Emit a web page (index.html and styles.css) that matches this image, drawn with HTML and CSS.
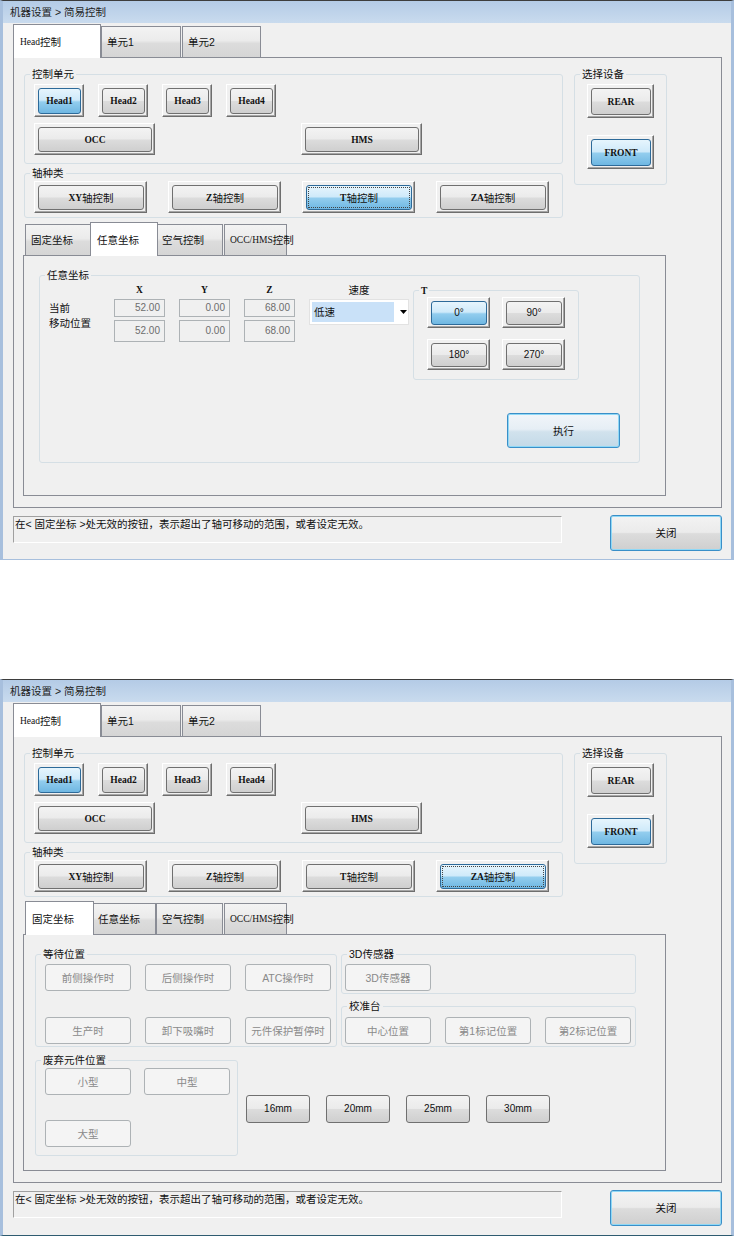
FILE: index.html
```html
<!DOCTYPE html>
<html lang="zh-CN">
<head>
    <meta charset="UTF-8">
    <title>简易控制</title>
    <link rel="stylesheet" href="styles.css">
</head>
<body>

<!-- Window 1: 任意坐标 page -->
<div class="win">
    <div class="titlebar">机器设置 &gt; 简易控制</div>
    <div class="wbody">
        <div class="tabs">
            <div class="tab on t-head"><span class="lat">Head</span>控制</div>
            <div class="tab t-u1">单元1</div>
            <div class="tab t-u2">单元2</div>
        </div>
        <div class="panel">
            <div class="toprow">
                <div class="leftcol">
                    <fieldset class="grp g-unit">
                        <legend>控制单元</legend>
                        <div class="gb">
                            <div class="row heads">
                                <button class="fb hd on"><span class="face"><span class="lat">Head1</span></span></button>
                                <button class="fb hd"><span class="face"><span class="lat">Head2</span></span></button>
                                <button class="fb hd"><span class="face"><span class="lat">Head3</span></span></button>
                                <button class="fb hd"><span class="face"><span class="lat">Head4</span></span></button>
                            </div>
                            <div class="row occrow">
                                <button class="fb wide"><span class="face"><span class="lat">OCC</span></span></button>
                                <button class="fb wide"><span class="face"><span class="lat">HMS</span></span></button>
                            </div>
                        </div>
                    </fieldset>
                    <fieldset class="grp g-axis">
                        <legend>轴种类</legend>
                        <div class="gb row">
                            <button class="fb ax"><span class="face"><span class="lat">XY</span>轴控制</span></button>
                            <button class="fb ax"><span class="face"><span class="lat">Z</span>轴控制</span></button>
                            <button class="fb ax on focus"><span class="face"><span class="lat">T</span>轴控制</span></button>
                            <button class="fb ax"><span class="face"><span class="lat">ZA</span>轴控制</span></button>
                        </div>
                    </fieldset>
                </div>
                <fieldset class="grp g-dev">
                    <legend>选择设备</legend>
                    <div class="gb">
                        <button class="fb dev"><span class="face"><span class="lat">REAR</span></span></button>
                        <button class="fb dev on"><span class="face"><span class="lat">FRONT</span></span></button>
                    </div>
                </fieldset>
            </div>

            <div class="subtabs">
                <div class="tab t-fix">固定坐标</div>
                <div class="tab on t-any">任意坐标</div>
                <div class="tab t-air">空气控制</div>
                <div class="tab t-occ"><span class="lat">OCC/HMS</span>控制</div>
            </div>
            <div class="subpanel any-pane">
                <fieldset class="grp g-any">
                    <legend>任意坐标</legend>
                    <div class="gb">
                        <div class="crow">
                            <div class="coords">
                                <span></span>
                                <span class="hdr">X</span>
                                <span class="hdr">Y</span>
                                <span class="hdr">Z</span>
                                <span class="hdr cjk">速度</span>
                                <span class="lbl">当前</span>
                                <span class="tb">52.00</span>
                                <span class="tb">0.00</span>
                                <span class="tb">68.00</span>
                                <div class="dd">
                                    <span class="sel">低速</span>
                                    <svg width="7" height="4" viewBox="0 0 7 4"><polygon points="0,0 7,0 3.5,4" fill="#000"/></svg>
                                </div>
                                <span class="lbl lbl2">移动位置</span>
                                <span class="tb">52.00</span>
                                <span class="tb">0.00</span>
                                <span class="tb">68.00</span>
                            </div>
                            <fieldset class="grp g-t">
                                <legend><span class="lat">T</span></legend>
                                <div class="gb">
                                    <button class="fb deg on"><span class="face">0°</span></button>
                                    <button class="fb deg"><span class="face">90°</span></button>
                                    <button class="fb deg"><span class="face">180°</span></button>
                                    <button class="fb deg"><span class="face">270°</span></button>
                                </div>
                            </fieldset>
                        </div>
                        <div class="exec-row">
                            <button class="dbtn exec"><span class="face">执行</span></button>
                        </div>
                    </div>
                </fieldset>
            </div>
        </div>
        <div class="footer">
            <div class="status">在&lt; 固定坐标 &gt;处无效的按钮，表示超出了轴可移动的范围，或者设定无效。</div>
            <button class="dbtn close"><span class="face">关闭</span></button>
        </div>
    </div>
</div>

<!-- Window 2: 固定坐标 page -->
<div class="win win2">
    <div class="titlebar">机器设置 &gt; 简易控制</div>
    <div class="wbody">
        <div class="tabs">
            <div class="tab on t-head"><span class="lat">Head</span>控制</div>
            <div class="tab t-u1">单元1</div>
            <div class="tab t-u2">单元2</div>
        </div>
        <div class="panel">
            <div class="toprow">
                <div class="leftcol">
                    <fieldset class="grp g-unit">
                        <legend>控制单元</legend>
                        <div class="gb">
                            <div class="row heads">
                                <button class="fb hd on"><span class="face"><span class="lat">Head1</span></span></button>
                                <button class="fb hd"><span class="face"><span class="lat">Head2</span></span></button>
                                <button class="fb hd"><span class="face"><span class="lat">Head3</span></span></button>
                                <button class="fb hd"><span class="face"><span class="lat">Head4</span></span></button>
                            </div>
                            <div class="row occrow">
                                <button class="fb wide"><span class="face"><span class="lat">OCC</span></span></button>
                                <button class="fb wide"><span class="face"><span class="lat">HMS</span></span></button>
                            </div>
                        </div>
                    </fieldset>
                    <fieldset class="grp g-axis">
                        <legend>轴种类</legend>
                        <div class="gb row">
                            <button class="fb ax"><span class="face"><span class="lat">XY</span>轴控制</span></button>
                            <button class="fb ax"><span class="face"><span class="lat">Z</span>轴控制</span></button>
                            <button class="fb ax"><span class="face"><span class="lat">T</span>轴控制</span></button>
                            <button class="fb ax on focus"><span class="face"><span class="lat">ZA</span>轴控制</span></button>
                        </div>
                    </fieldset>
                </div>
                <fieldset class="grp g-dev">
                    <legend>选择设备</legend>
                    <div class="gb">
                        <button class="fb dev"><span class="face"><span class="lat">REAR</span></span></button>
                        <button class="fb dev on"><span class="face"><span class="lat">FRONT</span></span></button>
                    </div>
                </fieldset>
            </div>

            <div class="subtabs">
                <div class="tab on t-fix">固定坐标</div>
                <div class="tab t-any">任意坐标</div>
                <div class="tab t-air">空气控制</div>
                <div class="tab t-occ"><span class="lat">OCC/HMS</span>控制</div>
            </div>
            <div class="subpanel fix-pane">
                <div class="frow">
                    <fieldset class="grp g-wait">
                        <legend>等待位置</legend>
                        <div class="gb">
                            <button class="dis">前侧操作时</button>
                            <button class="dis">后侧操作时</button>
                            <button class="dis">ATC操作时</button>
                            <button class="dis">生产时</button>
                            <button class="dis">卸下吸嘴时</button>
                            <button class="dis">元件保护暂停时</button>
                        </div>
                    </fieldset>
                    <div class="rcol">
                        <fieldset class="grp g-3d">
                            <legend>3D传感器</legend>
                            <div class="gb">
                                <button class="dis">3D传感器</button>
                            </div>
                        </fieldset>
                        <fieldset class="grp g-cal">
                            <legend>校准台</legend>
                            <div class="gb">
                                <button class="dis">中心位置</button>
                                <button class="dis">第1标记位置</button>
                                <button class="dis">第2标记位置</button>
                            </div>
                        </fieldset>
                    </div>
                </div>
                <div class="frow frow2">
                    <fieldset class="grp g-waste">
                        <legend>废弃元件位置</legend>
                        <div class="gb">
                            <button class="dis">小型</button>
                            <button class="dis">中型</button>
                            <button class="dis">大型</button>
                        </div>
                    </fieldset>
                    <div class="mm">
                        <button class="nb">16mm</button>
                        <button class="nb">20mm</button>
                        <button class="nb">25mm</button>
                        <button class="nb">30mm</button>
                    </div>
                </div>
            </div>
        </div>
        <div class="footer">
            <div class="status">在&lt; 固定坐标 &gt;处无效的按钮，表示超出了轴可移动的范围，或者设定无效。</div>
            <button class="dbtn close"><span class="face">关闭</span></button>
        </div>
    </div>
</div>

</body>
</html>
```

FILE: styles.css
```css
* {
    box-sizing: border-box;
}

body {
    margin: 0;
    background: #fff;
    font-family: "Liberation Sans", "Noto Sans CJK SC", sans-serif;
    font-size: 10.5px;
    line-height: 12px;
    color: #111;
}

button {
    font: inherit;
    color: inherit;
    margin: 0;
    padding: 0;
    border: 0;
    background: none;
    display: block;
    text-align: center;
}

fieldset {
    margin: 0;
    padding: 0;
    min-width: 0;
}

.lat {
    font-family: "Liberation Serif", serif;
    font-size: 9.5px;
}

/* Window frame */
.win {
    width: 734px;
    height: 560px;
    background: #f0f0f0;
    border-top: 1px solid #3d3d3d;
    border-left: 3px solid #a7bfdd;
    border-right: 3px solid #a7bfdd;
    border-bottom: 1px solid #a7bfdd;
}

.win2 {
    margin-top: 119px;
    height: 557px;
    border-bottom-color: #2e5b70;
}

.titlebar {
    height: 22px;
    padding-left: 7px;
    display: flex;
    align-items: center;
    background: linear-gradient(#b4cbe6, #c9dbee);
    color: #222;
}

.wbody {
    padding: 1px 9px 0 10px;
}

/* Tabs */
.tabs, .subtabs {
    display: flex;
    align-items: flex-start;
    height: 34px;
    margin-bottom: -1px;
    position: relative;
    z-index: 1;
}

.tab {
    height: 31px;
    margin-top: 2px;
    padding-left: 5px;
    display: flex;
    align-items: center;
    white-space: nowrap;
    border: 1px solid #898c95;
    border-bottom: none;
    background: linear-gradient(#f3f3f3, #ebebeb 45%, #dcdcdc 55%, #d5d5d5);
}

.tab.on {
    height: 34px;
    margin-top: 0;
    padding-left: 6px;
    background: #fff;
    position: relative;
    z-index: 2;
}

.t-head { width: 88px; }
.t-u1 { width: 80px; }
.t-u2 { width: 79px; margin-left: 1px; }

.subtabs {
    margin-top: 4px;
    margin-left: -1px;
}

.t-fix { width: 67px; margin-left: 2px; }
.t-any { width: 64px; }
.t-air { width: 67px; }
.t-occ { width: 63px; margin-left: 1px; }

.t-fix.on { width: 69px; margin-right: -2px; }
.t-any.on { width: 68px; margin-left: -2px; margin-right: -2px; }

.panel {
    height: 451px;
    border: 1px solid #898c95;
    padding: 10px 0 0 10px;
}

.win2 .panel { height: 447px; }

.subpanel {
    width: 643px;
    height: 241px;
    margin-left: -1px;
    border: 1px solid #898c95;
}

.win2 .subpanel { height: 237px; }

.any-pane { padding: 13px 0 0 15px; }
.fix-pane { padding: 13px 0 0 11px; }

/* Group boxes */
.grp {
    border: 1px solid #d5dfe5;
    border-radius: 3px;
}

.grp legend {
    margin-left: 5px;
    padding: 0 2px;
    height: 12px;
    line-height: 12px;
}

.row { display: flex; }

.toprow {
    display: flex;
    align-items: flex-start;
}

.leftcol { width: 539px; }

.g-unit .gb { padding: 4px 0 8px 9px; }
.heads { gap: 14px; }
.hd { width: 50px; height: 33px; }
.occrow { margin-top: 6px; }
.wide { width: 121px; height: 32px; }
.wide + .wide { margin-left: 146px; }

.g-axis { margin-top: 3px; }
.g-axis .gb { padding: 2px 0 4px 9px; gap: 21px; }
.ax { width: 113px; height: 32px; }

.g-dev { width: 93px; margin-left: 11px; }
.g-dev .gb { padding: 4px 0 15px 12px; }
.dev { width: 67px; height: 34px; }
.dev + .dev { margin-top: 17px; }

/* Framed push buttons */
.fb {
    padding: 3px 2px 2px 3px;
    border: 1px solid;
    border-color: #fff #6e6e6e #6e6e6e #fff;
    box-shadow: inset -1px -1px 0 #a5a5a5;
    background: #f0f0f0;
}

.face {
    display: flex;
    align-items: center;
    justify-content: center;
    height: 100%;
    white-space: nowrap;
    border: 1px solid #707070;
    border-radius: 3px;
    background: linear-gradient(#f3f3f3, #ebebeb 48%, #dcdcdc 52%, #cfcfcf);
}

.fb .lat { font-weight: bold; }

.on .face {
    border-color: #2d6a99;
    background: linear-gradient(#e6f5fd, #cfeafa 46%, #92cdee 54%, #6fb7e2);
}

.focus .face {
    outline: 1px dotted #444;
    outline-offset: -3px;
}

/* 任意坐标 */
.g-any { width: 601px; }
.g-any .gb { padding: 3px 0 14px 9px; }

.crow {
    display: flex;
    align-items: flex-start;
}

.coords {
    display: grid;
    grid-template-columns: 51px 51px 51px 51px 100px;
    grid-template-rows: 12px 18px 22px;
    gap: 3px 14px;
}

.hdr {
    text-align: center;
    font-family: "Liberation Serif", serif;
    font-weight: bold;
    font-size: 9.5px;
}

.hdr.cjk {
    font-family: "Liberation Sans", "Noto Sans CJK SC", sans-serif;
    font-weight: normal;
    font-size: 10.5px;
}

.lbl { align-self: center; white-space: nowrap; }
.lbl2 { align-self: start; margin-top: -3px; }

.tb {
    display: flex;
    align-items: center;
    justify-content: flex-end;
    padding-right: 4px;
    border: 1px solid #adb2b5;
    color: #6d6d6d;
    font-size: 10px;
}

.dd {
    grid-column: 5;
    grid-row: 2 / span 2;
    align-self: start;
    height: 26px;
    display: flex;
    align-items: center;
    padding: 2px 0 2px 2px;
    border: 1px solid #e2e2e2;
    background: #fff;
}

.dd .sel {
    flex: 0 0 82px;
    height: 100%;
    display: flex;
    align-items: center;
    padding-left: 2px;
    background: #c9e1f8;
}

.dd svg { margin-left: 6px; }

.g-t { width: 166px; margin-left: 4px; }
.g-t legend .lat { font-weight: bold; }

.g-t .gb {
    display: grid;
    grid-template-columns: 63px 63px;
    gap: 11px 12px;
    padding: 1px 0 9px 13px;
}

.deg { height: 31px; font-size: 10px; }

.exec-row {
    display: flex;
    justify-content: flex-end;
    margin-top: 33px;
    padding-right: 19px;
}

/* Default buttons */
.dbtn .face {
    border-color: #3a8fc8;
    box-shadow: inset 0 0 0 1px #8fd8f6;
}

.exec { width: 113px; height: 35px; }

.exec .face {
    background: linear-gradient(#f1f5f9, #e6eef5 46%, #d1e2ed 54%, #c3d9e7);
}

.close { width: 112px; height: 36px; margin-left: auto; }

/* Footer */
.footer {
    display: flex;
    align-items: flex-start;
    margin-top: 7px;
}

.status {
    width: 549px;
    height: 27px;
    margin-top: 1px;
    padding: 1px 0 0 1px;
    white-space: nowrap;
    border: 1px solid;
    border-color: #a0a0a0 #fff #fff #a0a0a0;
}

/* 固定坐标 */
.frow {
    display: flex;
    align-items: flex-start;
}

.g-wait { width: 302px; }

.g-wait .gb {
    display: grid;
    grid-template-columns: repeat(3, 86px);
    gap: 26px 14px;
    padding: 4px 0 2px 9px;
}

.rcol { width: 295px; margin-left: 4px; }
.g-3d .gb { padding: 4px 0 2px 3px; }
.g-cal { margin-top: 6px; }

.g-cal .gb {
    display: flex;
    gap: 14px;
    padding: 5px 0 2px 3px;
}

.frow2 { margin-top: 7px; }
.g-waste { width: 203px; }

.g-waste .gb {
    display: grid;
    grid-template-columns: 86px 86px;
    gap: 25px 13px;
    padding: 2px 0 8px 9px;
}

.dis {
    width: 86px;
    height: 27px;
    display: flex;
    align-items: center;
    justify-content: center;
    white-space: nowrap;
    border: 1px solid #adb2b5;
    border-radius: 3px;
    background: #f4f4f4;
    color: #8a8a8a;
}

.mm {
    display: flex;
    gap: 16px;
    margin: 41px 0 0 8px;
}

.nb {
    width: 64px;
    height: 28px;
    display: flex;
    align-items: center;
    justify-content: center;
    font-size: 10px;
    border: 1px solid #707070;
    border-radius: 3px;
    background: linear-gradient(#f3f3f3, #ebebeb 48%, #dcdcdc 52%, #cfcfcf);
}
```
